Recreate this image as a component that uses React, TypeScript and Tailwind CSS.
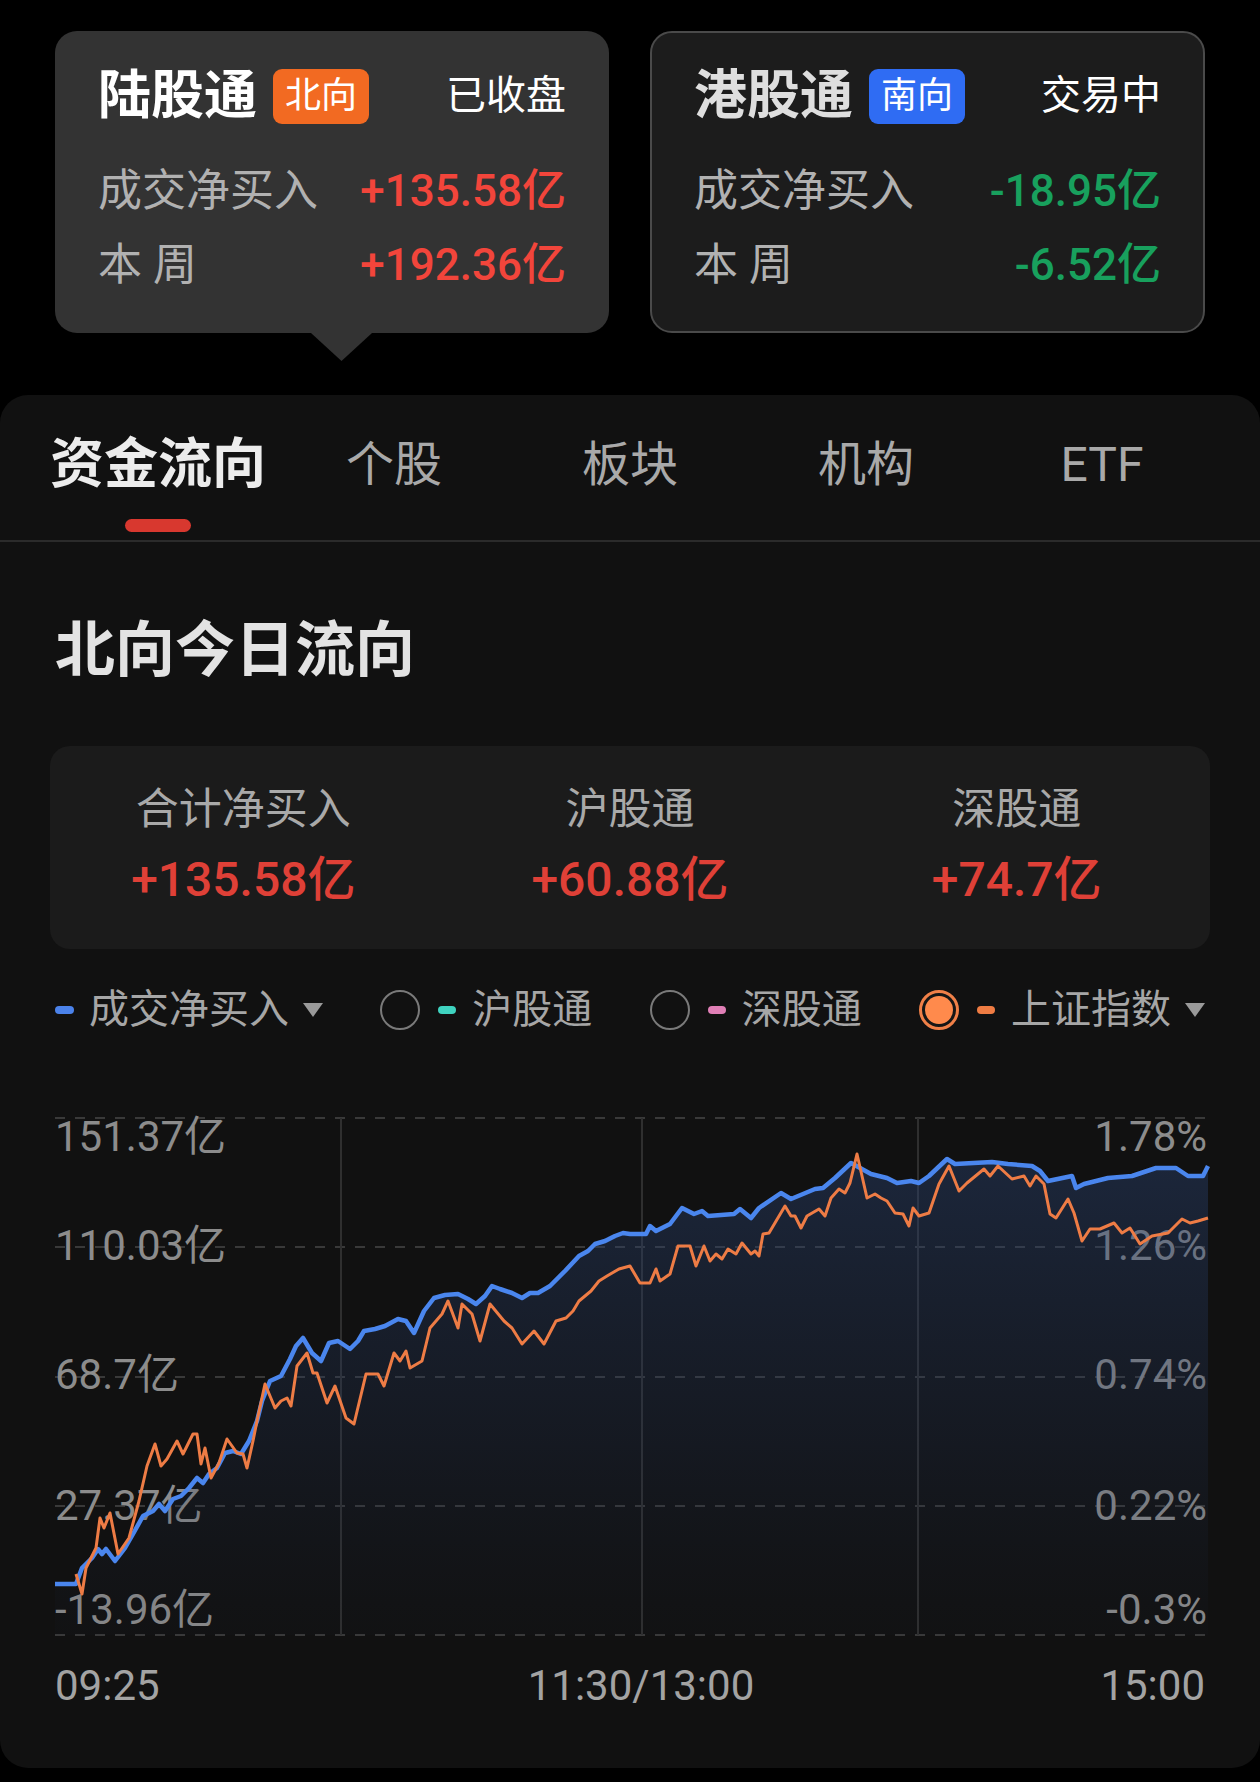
import React from "react"

const BLUE = [
  [55, 1583], [76, 1583], [82, 1567], [92, 1557], [98, 1548], [102, 1553], [106, 1548], [115, 1560],
  [125, 1547], [133, 1533], [143, 1515], [153, 1510], [159, 1503], [165, 1510], [173, 1498], [181, 1495],
  [189, 1487], [197, 1477], [203, 1482], [209, 1473], [217, 1467], [225, 1452], [233, 1450], [241, 1453],
  [249, 1440], [257, 1420], [262, 1400], [270, 1380], [281, 1375], [290, 1358], [296, 1345], [303, 1337],
  [312, 1352], [321, 1360], [329, 1342], [338, 1340], [350, 1348], [358, 1340], [364, 1330], [375, 1328],
  [385, 1325], [398, 1318], [406, 1320], [414, 1332], [424, 1310], [434, 1297], [445, 1294], [458, 1293],
  [468, 1298], [476, 1303], [485, 1295], [492, 1285], [500, 1288], [512, 1292], [522, 1297], [530, 1292],
  [538, 1292], [550, 1285], [565, 1270], [579, 1255], [588, 1250], [595, 1243], [605, 1240], [615, 1235],
  [623, 1232], [630, 1233], [646, 1233], [650, 1225], [656, 1230], [670, 1223], [682, 1207], [694, 1213],
  [702, 1210], [708, 1215], [734, 1213], [740, 1208], [751, 1217], [759, 1207], [781, 1192], [791, 1198],
  [815, 1188], [823, 1187], [835, 1177], [851, 1162], [871, 1173], [887, 1177], [897, 1182], [911, 1180],
  [919, 1182], [929, 1175], [947, 1158], [955, 1163], [992, 1161], [1008, 1163], [1032, 1165], [1040, 1170],
  [1048, 1180], [1072, 1175], [1076, 1187], [1084, 1183], [1108, 1177], [1132, 1175], [1156, 1167],
  [1176, 1167], [1188, 1175], [1203, 1175], [1208, 1165],
]

const ORANGE = [
  [76, 1573], [82, 1593], [86, 1567], [96, 1547], [100, 1517], [104, 1527], [110, 1512], [118, 1553],
  [129, 1537], [139, 1500], [147, 1465], [155, 1443], [161, 1465], [167, 1458], [177, 1440], [183, 1453],
  [193, 1433], [197, 1433], [201, 1463], [205, 1447], [211, 1477], [219, 1462], [227, 1438], [237, 1452],
  [243, 1453], [247, 1467], [253, 1440], [257, 1420], [265, 1383], [275, 1407], [281, 1400], [287, 1397],
  [291, 1405], [297, 1365], [307, 1352], [313, 1372], [317, 1372], [327, 1402], [335, 1385], [346, 1417],
  [354, 1423], [366, 1373], [378, 1373], [384, 1385], [394, 1352], [400, 1360], [406, 1350], [410, 1367],
  [422, 1360], [430, 1327], [442, 1313], [448, 1300], [458, 1327], [462, 1303], [472, 1313], [480, 1340],
  [490, 1303], [504, 1320], [512, 1327], [522, 1343], [534, 1330], [544, 1343], [556, 1320], [566, 1317],
  [573, 1310], [579, 1300], [591, 1290], [599, 1280], [607, 1275], [619, 1268], [630, 1265], [640, 1282],
  [650, 1282], [656, 1268], [660, 1280], [670, 1273], [678, 1245], [690, 1245], [696, 1265], [704, 1245],
  [710, 1260], [716, 1253], [722, 1258], [728, 1248], [736, 1253], [742, 1242], [751, 1253], [755, 1250],
  [759, 1255], [763, 1233], [769, 1232], [785, 1205], [791, 1215], [795, 1215], [801, 1227], [807, 1215],
  [819, 1208], [825, 1215], [831, 1197], [839, 1188], [845, 1192], [850, 1182], [857, 1153], [867, 1197],
  [875, 1193], [881, 1197], [887, 1200], [895, 1212], [903, 1213], [909, 1225], [913, 1207], [919, 1215],
  [929, 1212], [939, 1183], [949, 1165], [959, 1190], [967, 1182], [984, 1168], [990, 1175], [998, 1165],
  [1012, 1178], [1024, 1175], [1030, 1185], [1036, 1175], [1044, 1183], [1050, 1213], [1056, 1217],
  [1068, 1198], [1074, 1212], [1082, 1240], [1090, 1228], [1100, 1228], [1114, 1222], [1122, 1232],
  [1130, 1227], [1140, 1243], [1152, 1235], [1168, 1232], [1182, 1218], [1190, 1222], [1198, 1220],
  [1208, 1217],
]

const GRID_Y = [1117, 1246, 1376, 1505, 1634]
const V_LINES = [341, 642, 918]
const LABELS = [
  { y: 1135, left: "151.37亿", right: "1.78%" },
  { y: 1244, left: "110.03亿", right: "1.26%" },
  { y: 1373, left: "68.7亿", right: "0.74%" },
  { y: 1504, left: "27.37亿", right: "0.22%" },
  { y: 1608, left: "-13.96亿", right: "-0.3%" },
]

const FONT = "Roboto, 'Noto Sans CJK SC', sans-serif"

interface CardProps {
  name: string
  badge: string
  badgeClass: string
  status: string
  net: string
  week: string
  valueClass: string
  boxClass: string
  titleClass: string
  pointer?: boolean
}

function FlowCard({ name, badge, badgeClass, status, net, week, valueClass, boxClass, titleClass, pointer }: CardProps) {
  return (
    <div className={`relative h-[302px] rounded-[22px] ${boxClass}`}>
      <div className="flex h-[60px] items-center">
        <span className={`text-[53px] font-bold leading-[60px] ${titleClass}`}>{name}</span>
        <span className={`ml-[16px] h-[55px] rounded-[9px] px-[12px] text-[36px] leading-[55px] text-white ${badgeClass}`}>
          {badge}
        </span>
        <span className="ml-auto text-[40px] leading-[60px] text-white">{status}</span>
      </div>
      <div className="mt-[40px] flex h-[50px] items-center justify-between">
        <span className="text-[44px] text-[#b1b1b1]">成交净买入</span>
        <span className={`text-[44px] font-medium ${valueClass}`}>{net}</span>
      </div>
      <div className="mt-[24px] flex h-[50px] items-center justify-between">
        <span className="text-[44px] text-[#b1b1b1]">本 周</span>
        <span className={`text-[44px] font-medium ${valueClass}`}>{week}</span>
      </div>
      {pointer && (
        <svg className="absolute left-[256px] top-full" width="61" height="28" viewBox="0 0 61 28">
          <polygon points="0,0 61,0 30.5,28" fill="#333333" />
        </svg>
      )}
    </div>
  )
}

function Caret() {
  return (
    <svg width="20" height="14" viewBox="0 0 20 14">
      <polygon points="0,0 20,0 10,14" fill="#9a9a9a" />
    </svg>
  )
}

function Legend() {
  return (
    <div className="mt-[31px] flex h-[60px] items-center justify-between px-[55px] text-[40px] text-[#a6a6a6]">
      <div className="flex items-center">
        <span className="h-[8px] w-[19px] rounded-full bg-[#4b82ea]" />
        <span className="ml-[15px]">成交净买入</span>
        <span className="ml-[14px]"><Caret /></span>
      </div>
      <div className="flex items-center">
        <span className="h-[40px] w-[40px] rounded-full border-2 border-[#7a7a7a]" />
        <span className="ml-[18px] h-[8px] w-[18px] rounded-full bg-[#3fd3c0]" />
        <span className="ml-[16px]">沪股通</span>
      </div>
      <div className="flex items-center">
        <span className="h-[40px] w-[40px] rounded-full border-2 border-[#7a7a7a]" />
        <span className="ml-[18px] h-[8px] w-[18px] rounded-full bg-[#e07fb6]" />
        <span className="ml-[16px]">深股通</span>
      </div>
      <div className="flex items-center">
        <span className="flex h-[40px] w-[40px] items-center justify-center rounded-full border-[3px] border-[#f08048] bg-[#161616]">
          <span className="h-[28px] w-[28px] rounded-full bg-[#ff8a4c]" />
        </span>
        <span className="ml-[18px] h-[8px] w-[18px] rounded-full bg-[#ef7c43]" />
        <span className="ml-[16px]">上证指数</span>
        <span className="ml-[14px]"><Caret /></span>
      </div>
    </div>
  )
}

function Chart() {
  const blue = BLUE.map((p) => p.join(",")).join(" ")
  const orange = ORANGE.map((p) => p.join(",")).join(" ")
  const area = `M55,1634 L${BLUE.map((p) => p.join(",")).join(" L")} L1208,1634 Z`
  return (
    <svg className="mt-[41px] block" width="1260" height="560" viewBox="0 1080 1260 560">
      <defs>
        <linearGradient id="flowFill" x1="0" y1="1150" x2="0" y2="1634" gradientUnits="userSpaceOnUse">
          <stop offset="0" stopColor="#2b4577" stopOpacity="0.42" />
          <stop offset="0.6" stopColor="#24365c" stopOpacity="0.22" />
          <stop offset="1" stopColor="#1c2840" stopOpacity="0.05" />
        </linearGradient>
      </defs>
      {GRID_Y.map((y) => (
        <line key={y} x1="55" x2="1208" y1={y} y2={y} stroke="#393939" strokeWidth="2" strokeDasharray="10 10" />
      ))}
      {V_LINES.map((x) => (
        <line key={x} x1={x} x2={x} y1="1117" y2="1634" stroke="#2f2f2f" strokeWidth="2" />
      ))}
      {LABELS.map((l) => (
        <g key={l.y} fontFamily={FONT} fontSize="42" fill="#8c8c8c" dominantBaseline="central">
          <text x="55" y={l.y}>{l.left}</text>
          <text x="1207" y={l.y} textAnchor="end">{l.right}</text>
        </g>
      ))}
      <path d={area} fill="url(#flowFill)" />
      <polyline points={blue} fill="none" stroke="#4a86ee" strokeWidth="4.5" strokeLinejoin="round" />
      <polyline points={orange} fill="none" stroke="#ee7c45" strokeWidth="3" strokeLinejoin="round" />
    </svg>
  )
}

const TABS = ["资金流向", "个股", "板块", "机构", "ETF"]

export default function App() {
  return (
    <div className="min-h-[1782px] w-[1260px] bg-black font-['Roboto','Noto_Sans_CJK_SC',sans-serif]">
      <div className="flex gap-[41px] px-[55px] pt-[31px]">
        <div className="w-[554px]">
          <FlowCard
            name="陆股通"
            badge="北向"
            badgeClass="bg-[#f26a22]"
            status="已收盘"
            net="+135.58亿"
            week="+192.36亿"
            valueClass="text-[#f2453b]"
            boxClass="bg-[#333333] px-[43px] pt-[35px]"
            titleClass="text-white"
            pointer
          />
        </div>
        <div className="w-[555px]">
          <FlowCard
            name="港股通"
            badge="南向"
            badgeClass="bg-[#2f6cf3]"
            status="交易中"
            net="-18.95亿"
            week="-6.52亿"
            valueClass="text-[#18a05d]"
            boxClass="border-2 border-[#4a4a4a] bg-[#1c1c1c] px-[42px] pt-[33px]"
            titleClass="text-[#dedede]"
          />
        </div>
      </div>

      <div className="mt-[62px] h-[1373px] rounded-[28px] bg-[#111111]">
        <div className="grid grid-cols-5 px-[40px] pt-[40px]">
          {TABS.map((t, i) => (
            <div key={t} className="flex flex-col items-center">
              <span
                className={
                  i === 0
                    ? "text-[54px] font-bold leading-[60px] text-[#ececec]"
                    : "text-[48px] leading-[60px] text-[#a9a9a9]"
                }
              >
                {t}
              </span>
              <span className={`mt-[24px] h-[13px] w-[66px] rounded-full ${i === 0 ? "bg-[#d8382f]" : "bg-transparent"}`} />
            </div>
          ))}
        </div>
        <div className="mt-[8px] h-[2px] bg-[#2b2b2b]" />

        <div className="mt-[74px] px-[55px] text-[60px] font-bold leading-[70px] text-[#e3e3e3]">北向今日流向</div>

        <div className="mx-[50px] mt-[60px] grid h-[203px] grid-cols-3 rounded-[20px] bg-[#1b1b1b] pt-[38px]">
          {[
            ["合计净买入", "+135.58亿"],
            ["沪股通", "+60.88亿"],
            ["深股通", "+74.7亿"],
          ].map(([label, value]) => (
            <div key={label} className="flex flex-col items-center">
              <span className="text-[43px] leading-[50px] text-[#a9a9a9]">{label}</span>
              <span className="mt-[18px] text-[48px] font-medium leading-[56px] text-[#df4037]">{value}</span>
            </div>
          ))}
        </div>

        <Legend />
        <Chart />

        <div className="mt-[20px] flex justify-between px-[55px] text-[42px] leading-[50px] text-[#a3a3a3]">
          <span>09:25</span>
          <span className="pl-[22px]">11:30/13:00</span>
          <span>15:00</span>
        </div>
      </div>
    </div>
  )
}
